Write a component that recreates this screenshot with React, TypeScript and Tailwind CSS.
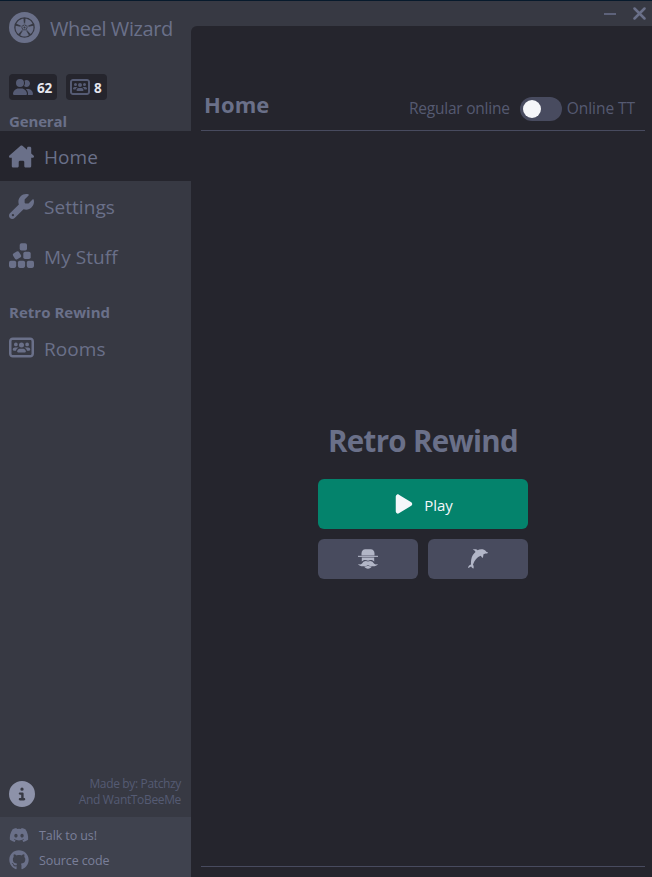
import type { ReactNode } from "react";
import {
  FaCircleInfo,
  FaDiscord,
  FaGithub,
  FaHouseChimney,
  FaPlay,
  FaUserGroup,
  FaUsersRectangle,
  FaWrench,
} from "react-icons/fa6";

function NavItem({ icon, label, active = false }: { icon: ReactNode; label: string; active?: boolean }) {
  return (
    <div className={`flex h-[50px] items-center gap-[10px] pl-[9px] ${active ? "bg-[#25252d]" : ""}`}>
      <span className="flex w-[25px] justify-center">{icon}</span>
      <span className="pt-px text-[19px] leading-6 tracking-[0.05px] whitespace-nowrap">{label}</span>
    </div>
  );
}

function Wheel() {
  return (
    <svg width="31" height="31" viewBox="0 0 31 31" fill="currentColor">
      <circle cx="15.5" cy="15.5" r="12.9" fill="none" stroke="currentColor" strokeWidth="5.2" />
      {[0, 72, 144, 216, 288].map((angle) => (
        <g key={angle} transform={`rotate(${angle} 15.5 15.5)`}>
          <path d="M14.100 18.300h2.800l3 4.900c-2.400 1.700-6.400 1.700-8.800 0z" />
          <path d="M15.500 15.500V10.800" stroke="currentColor" strokeWidth=".6" />
        </g>
      ))}
      <circle cx="15.5" cy="15.5" r="2.100" />
      <circle cx="15.5" cy="15.5" r="1" fill="#373943" />
    </svg>
  );
}

function Blocks() {
  return (
    <svg width="25" height="25" viewBox="0 0 25 25" fill="currentColor" className="mb-px">
      <rect x="10.700" y=".2" width="7.300" height="7.300" rx="1.800" />
      <rect x="4.500" y="8.900" width="7" height="7" rx="1.800" transform="rotate(-30 8 12.400)" />
      <rect x="14.300" y="8.700" width="7.400" height="7.400" rx="1.800" />
      <rect x="0" y="17.700" width="7.200" height="7.200" rx="1.800" />
      <rect x="8.900" y="17.700" width="7.200" height="7.200" rx="1.800" />
      <rect x="17.800" y="17.700" width="7.200" height="7.200" rx="1.800" />
    </svg>
  );
}

function Gentleman() {
  return (
    <svg width="20" height="20" viewBox="0 0 20 20" fill="currentColor">
      <path d="M3.500 6.500V4.500C3.500 2 5 .3 7.300 .3h5.400c2.300 0 3.800 1.700 3.800 4.200v2z" />
      <path d="M0 6.800h20v1.100H0z" />
      <path d="M3.800 8.500h12.400v4.300c-1-1.700-3.700-2.300-6.200-1-2.500-1.300-5.200-.7-6.200 1z" />
      <path d="M10 12.600c2.200-1.100 4.300-.4 5.500 1.400 1 1.500 2.300 1.700 4.400 1-1 2.500-6.600 3.300-9.900.9C6.700 18.300 1.100 17.500.1 15c2.100.7 3.400.5 4.400-1 1.200-1.800 3.300-2.500 5.500-1.400z" />
      <path d="M6.300 17.600c1.500-.1 2.800-.4 3.700-.9.900.5 2.200.8 3.700.9-.7 1.300-2 2.100-3.700 2.100s-3-.8-3.700-2.100z" />
    </svg>
  );
}

function Dolphin() {
  return (
    <svg width="20" height="20" viewBox="0 0 20 20" fill="currentColor">
      <path d="M4.700.5C7.500 0 8.900.4 9.600 1.200 11.200.2 14 0 16 .8c1.400.5 1.900 1.300 2.300 2L20 3.600c0 .8-1 1.100-2.500 1-.9.500-1.600.7-2.200.8.2 1.500-.2 2.700-1 3.700-.5-1.100-1-1.900-1.700-2.400C9.200 8 6.500 11.200 5 15.600c.7 1.300.9 2.500.5 4-1.100-.3-1.800-1.200-2.300-2.200-.9.400-2 1.300-3.200 1.500.2-1.600 1.400-2.700 3-3.300-.2-5.600.9-9.600 4.500-12.600C7.200 1.900 6 1 4.700.5z" />
    </svg>
  );
}

export default function App() {
  return (
    <div className="flex h-[877px] w-[652px] flex-col overflow-hidden border-t border-[#071a2c] bg-[#373943] font-['Open_Sans','Noto_Sans',sans-serif] text-[#6a7089]">
      <div className="flex min-h-0 flex-1">
        <aside className="flex w-[191px] shrink-0 flex-col">
          <header className="flex h-[53px] items-center gap-[10px] pl-[9px]">
            <Wheel />
            <span className="pt-[3px] text-[20px] leading-6 tracking-[-0.43px] whitespace-nowrap">Wheel Wizard</span>
          </header>
          <div className="mt-5 flex h-[26px] gap-[9px] pl-[9px] font-bold text-[#e5e6ee]">
            <div className="flex w-12 items-center gap-1 rounded bg-[#25252d] pl-1">
              <FaUserGroup size={20} className="text-[#555b74]" />
              <span className="pt-px text-[13.5px] leading-5 tracking-[-0.3px]">62</span>
            </div>
            <div className="flex w-[41px] items-center gap-1 rounded bg-[#25252d] pl-1">
              <FaUsersRectangle size={20} className="text-[#555b74]" />
              <span className="pt-px text-[13.5px] leading-5">8</span>
            </div>
          </div>
          <h2 className="mt-[11px] h-[20px] pl-[9px] text-[15px] leading-5 font-bold tracking-[-0.15px]">General</h2>
          <nav>
            <NavItem active icon={<FaHouseChimney size={25} />} label="Home" />
            <NavItem icon={<FaWrench size={25} />} label="Settings" />
            <NavItem icon={<Blocks />} label="My Stuff" />
          </nav>
          <h2 className="mt-[21px] h-[21px] pl-[9px] text-[15px] leading-5 font-bold tracking-[0.02px]">Retro Rewind</h2>
          <NavItem icon={<FaUsersRectangle size={25} className="mb-[2px]" />} label="Rooms" />
          <div className="mt-auto flex h-[47px] items-start justify-between pr-[10px] pl-[9px]">
            <FaCircleInfo size={26} className="mt-[11px] text-[#8d92a9]" />
            <p className="mt-[6px] text-right text-[12px] leading-4 tracking-[-0.35px] text-[#555b73]">
              Made by: Patchzy
              <br />
              And WantToBeeMe
            </p>
          </div>
          <footer className="flex h-[60px] flex-col bg-[#3f424e] pt-[5px] pl-[9px] text-[12.500px] tracking-[-0.1px] text-[#7a7f99]">
            <div className="flex h-[25px] items-center gap-[10px]">
              <FaDiscord size={20} className="text-[#6a7089]" />
              <span className="pt-[3px]">Talk to us!</span>
            </div>
            <div className="flex h-[25px] items-center gap-[10px]">
              <FaGithub size={20} className="text-[#6a7089]" />
              <span className="pt-[3px]">Source code</span>
            </div>
          </footer>
        </aside>

        <div className="flex min-w-0 flex-1 flex-col">
          <div className="flex h-[25px] shrink-0 items-center justify-end gap-[17px] pr-[6px]">
            <span className="h-[2px] w-3 bg-[#5d627a]" />
            <svg width="13" height="13" viewBox="0 0 13 13" stroke="#6a7089" strokeWidth="2.500" strokeLinecap="round">
              <path d="M1.500 1.500l10 10M11.500 1.500l-10 10" />
            </svg>
          </div>
          <main className="flex flex-1 flex-col rounded-tl-md bg-[#25252d] pr-[7px] pl-[10px]">
            <div className="mt-[54px] flex h-[51px] shrink-0 items-center border-b border-[#484b5f] pr-[10px] pl-[3px]">
              <h1 className="flex-1 pb-[2px] text-[22px] font-bold tracking-[0.1px]">Home</h1>
              <div className="flex items-center pt-[7px] text-[15.5px] text-[#555a71]">
                <span className="tracking-[-0.22px]">Regular online</span>
                <span className="mr-[5px] ml-[10px] flex h-6 w-[42px] items-center rounded-full bg-[#484b5f] pl-[3px]">
                  <span className="size-[18px] rounded-full bg-[#f5f6f9]" />
                </span>
                <span className="tracking-[-0.05px]">Online TT</span>
              </div>
            </div>
            <section className="flex flex-1 flex-col items-center">
              <h2 className="mt-[290px] text-[29.5px] leading-[40px] font-bold tracking-[-0.7px]">Retro Rewind</h2>
              <div className="mt-[18px] flex h-[50px] w-[210px] items-center justify-center gap-[9px] rounded-md bg-[#04836c] text-[#f4f7fa]">
                <FaPlay size={22} />
                <span className="pt-px text-[15px] leading-5 tracking-[-0.1px]">Play</span>
              </div>
              <div className="mt-[10px] flex w-[210px] gap-[10px] text-[#b2b6c7]">
                <div className="flex h-10 flex-1 items-center justify-center rounded-md bg-[#484b5e]">
                  <Gentleman />
                </div>
                <div className="flex h-10 flex-1 items-center justify-center rounded-md bg-[#484b5e]">
                  <Dolphin />
                </div>
              </div>
            </section>
            <div className="mb-[10px] h-px bg-[#484b5f]" />
          </main>
        </div>
      </div>
    </div>
  );
}
